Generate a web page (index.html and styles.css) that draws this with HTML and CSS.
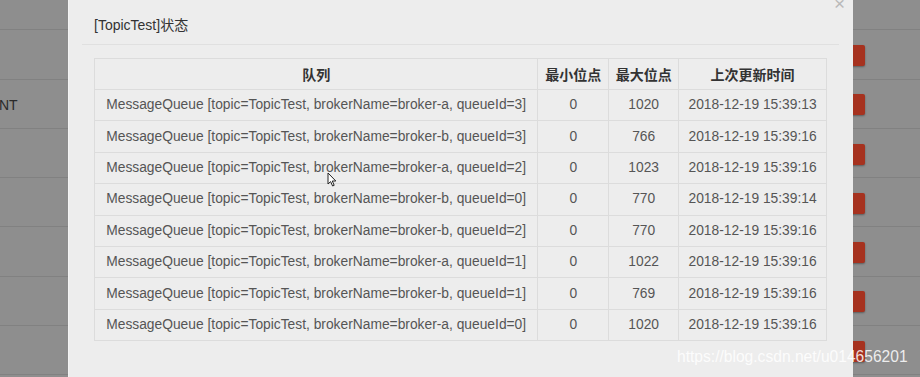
FILE: index.html
```html
<!DOCTYPE html>
<html>
<head>
<meta charset="utf-8">
<link rel="stylesheet" href="styles.css">
</head>
<body>
<div class="page">
  <div class="bg-rows">
    <div class="bg-row"><span class="bg-text"></span></div>
    <div class="bg-row"><span class="bg-text"></span><span class="btn"></span></div>
    <div class="bg-row"><span class="bg-text">NT</span><span class="btn"></span></div>
    <div class="bg-row"><span class="bg-text"></span><span class="btn"></span></div>
    <div class="bg-row"><span class="bg-text"></span><span class="btn"></span></div>
    <div class="bg-row"><span class="bg-text"></span><span class="btn"></span></div>
    <div class="bg-row"><span class="bg-text"></span><span class="btn"></span></div>
    <div class="bg-row"><span class="bg-text"></span><span class="btn"></span></div>
    <div class="bg-row"><span class="bg-text"></span><span class="btn"></span></div>
  </div>

  <div class="modal">
    <div class="modal-header">
      <span class="title">[TopicTest]状态</span>
      <span class="close">×</span>
    </div>
    <div class="modal-body">
      <table class="tbl">
        <thead>
          <tr><th class="c1">队列</th><th class="c2">最小位点</th><th class="c3">最大位点</th><th class="c4">上次更新时间</th></tr>
        </thead>
        <tbody>
          <tr><td>MessageQueue [topic=TopicTest, brokerName=broker-a, queueId=3]</td><td>0</td><td>1020</td><td>2018-12-19 15:39:13</td></tr>
          <tr><td>MessageQueue [topic=TopicTest, brokerName=broker-b, queueId=3]</td><td>0</td><td>766</td><td>2018-12-19 15:39:16</td></tr>
          <tr><td>MessageQueue [topic=TopicTest, brokerName=broker-a, queueId=2]</td><td>0</td><td>1023</td><td>2018-12-19 15:39:16</td></tr>
          <tr><td>MessageQueue [topic=TopicTest, brokerName=broker-b, queueId=0]</td><td>0</td><td>770</td><td>2018-12-19 15:39:14</td></tr>
          <tr><td>MessageQueue [topic=TopicTest, brokerName=broker-b, queueId=2]</td><td>0</td><td>770</td><td>2018-12-19 15:39:16</td></tr>
          <tr><td>MessageQueue [topic=TopicTest, brokerName=broker-a, queueId=1]</td><td>0</td><td>1022</td><td>2018-12-19 15:39:16</td></tr>
          <tr><td>MessageQueue [topic=TopicTest, brokerName=broker-b, queueId=1]</td><td>0</td><td>769</td><td>2018-12-19 15:39:16</td></tr>
          <tr><td>MessageQueue [topic=TopicTest, brokerName=broker-a, queueId=0]</td><td>0</td><td>1020</td><td>2018-12-19 15:39:16</td></tr>
        </tbody>
      </table>
    </div>
  </div>

  <svg class="cursor" width="10" height="15" viewBox="0 0 10 15"><path d="M1 1 L1 12 L3.6 9.6 L5.6 14 L7.2 13.3 L5.3 9 L8.8 9 Z" fill="#fff" stroke="#222" stroke-width="1"/></svg>

  <div class="watermark">https://blog.csdn.net/u014656201</div>
</div>
</body>
</html>
```

FILE: styles.css
```css
html, body {
  margin: 0;
  padding: 0;
}
body {
  width: 920px;
  height: 377px;
  overflow: hidden;
  background: #8e8e8e;
  font-family: "Liberation Sans", Arial, "Noto Sans CJK SC", sans-serif;
}
.page {
  position: relative;
  width: 920px;
  height: 377px;
  overflow: hidden;
}
.bg-rows {
  display: flex;
  flex-direction: column;
  margin-top: -19px;
}
.bg-row {
  height: 48.3px;
  border-bottom: 1px solid #818181;
  display: flex;
  align-items: center;
  justify-content: space-between;
  padding-right: 55px;
}
.bg-text {
  font-size: 14px;
  color: #2a2a2a;
  margin-left: -1px;
  margin-top: 2px;
}
.btn {
  width: 24px;
  height: 21px;
  margin-top: 2px;
  background: #a6321f;
  border-radius: 2px;
  box-shadow: 0 1px 2px rgba(0,0,0,0.35);
}
.modal {
  position: absolute;
  left: 68px;
  top: 0;
  width: 785px;
  height: 377px;
  background: #ededed;
  border-left: 1px solid #f4f4f4;
  box-sizing: border-box;
}
.modal-header {
  position: relative;
  margin: 0 14px 0 13px;
  height: 44px;
  border-bottom: 1px solid #e0e0e0;
  display: flex;
  align-items: center;
  padding-left: 12px;
}
.title {
  font-size: 14px;
  color: #333;
  margin-top: 4px;
}
.close {
  position: absolute;
  right: -6px;
  top: -6px;
  font-size: 19px;
  color: #b9b9b9;
  line-height: 19px;
}
.modal-body {
  padding: 13px 26px 0 25px;
}
.tbl {
  width: 733px;
  border-collapse: collapse;
  font-size: 13.8px;
  color: #555;
}
.tbl th, .tbl td {
  border: 1px solid #dcdcdc;
  padding: 0;
  text-align: center;
  vertical-align: middle;
  box-sizing: border-box;
}
.tbl th {
  height: 31px;
  color: #333;
  font-weight: bold;
  font-size: 14px;
}
.tbl td {
  height: 31.4px;
  line-height: 16px;
}
.c1 { width: 444px; }
.c2 { width: 71px; }
.c3 { width: 70px; }
.c4 { width: 148px; }
.cursor {
  position: absolute;
  left: 327px;
  top: 172px;
}
.watermark {
  position: absolute;
  left: 677px;
  top: 348px;
  font-size: 15.6px;
  color: rgba(255,255,255,0.85);
  white-space: nowrap;
}
```
